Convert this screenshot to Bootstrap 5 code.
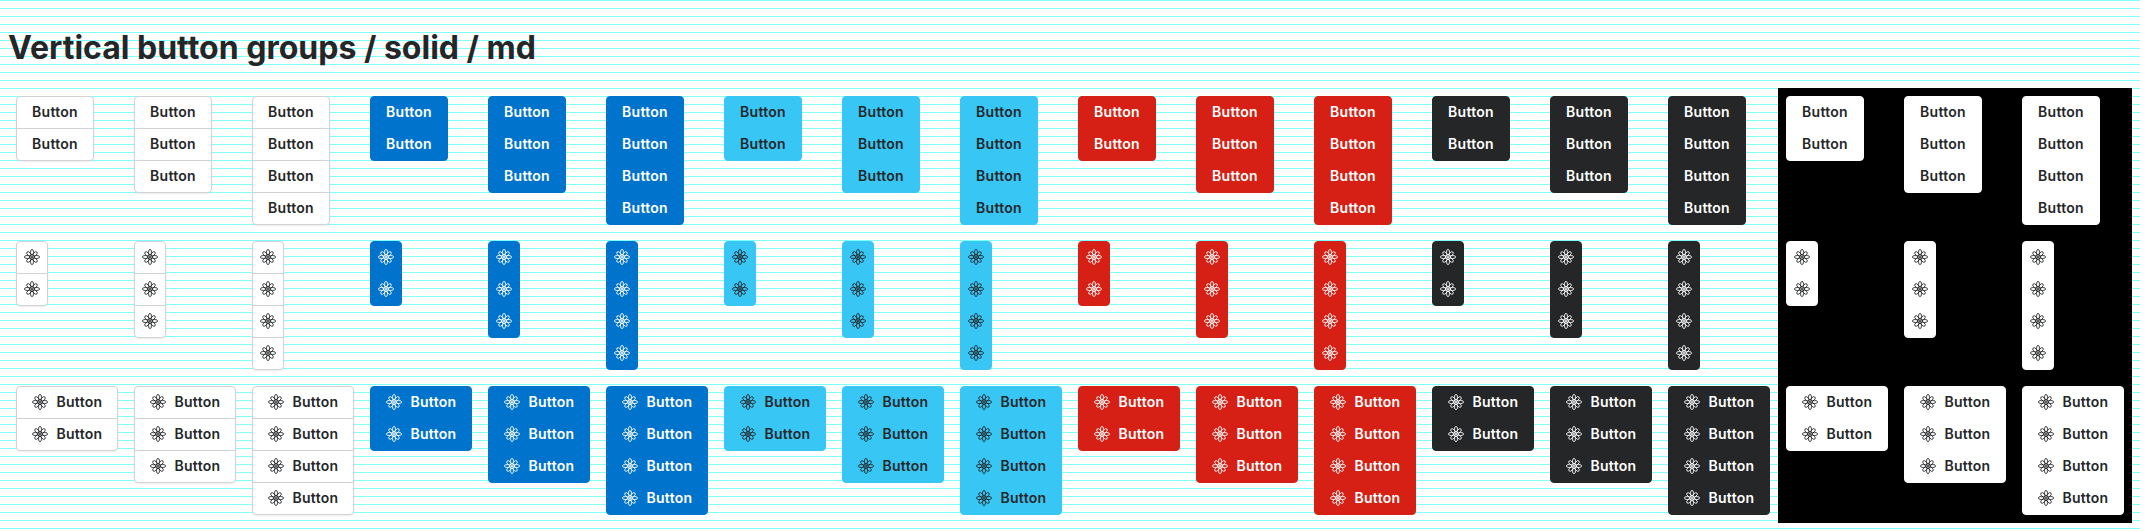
<!DOCTYPE html>
<html lang="en">
<head>
<meta charset="utf-8">
<meta name="viewport" content="width=device-width, initial-scale=1">
<title>Vertical button groups</title>
<link href="https://cdn.jsdelivr.net/npm/bootstrap@5.3.0/dist/css/bootstrap.min.css" rel="stylesheet">
<style>
body {
  font-family: Inter, "Liberation Sans", sans-serif;
  color: #242628;
  min-height: 531px;
  background: #fff linear-gradient(to bottom, #80ffff 1px, transparent 1px) 0 0 / 100% 8px;
}
.page-title { font-size: 32px; font-weight: 700; line-height: 40px; margin: 28px 0 20px; }
.variant { display: grid; grid-template-columns: repeat(3, 118px); grid-auto-rows: 145px; }
.variant > div { padding: 8px; }
.variant.on-black { background: #000; }
.vgroup { border-radius: 4px; }
.vgroup > .btn {
  --bs-btn-font-size: 14px;
  --bs-btn-font-weight: 600;
  --bs-btn-line-height: 16px;
  --bs-btn-padding-x: 15px;
  --bs-btn-padding-y: 0;
  --bs-btn-border-radius: 4px;
  --bs-btn-color: #fff;
  width: 78px;
  height: 33px;
  padding-bottom: 1px;
  letter-spacing: .02em;
}
.vgroup > .btn.icon-only { --bs-btn-padding-x: 7px; width: 32px; }
.vgroup > .btn.icon-label { width: 102px; gap: 8.5px; justify-content: start; }
.btn svg { width: 16px; height: 16px; flex: none; }
.tone-default .btn { --bs-btn-color: #242628; --bs-btn-bg: #fff; --bs-btn-border-color: #d1d2d6; }
.tone-default .vgroup { box-shadow: 0 1px 2px rgba(0, 0, 0, .08); }
.tone-primary .btn { --bs-btn-bg: #0074cc; --bs-btn-border-color: #0074cc; }
.tone-info .btn { --bs-btn-color: #242628; --bs-btn-bg: #38c6f4; --bs-btn-border-color: #38c6f4; }
.tone-danger .btn { --bs-btn-bg: #d62015; --bs-btn-border-color: #d62015; }
.tone-dark .btn { --bs-btn-bg: #242628; --bs-btn-border-color: #242628; }
.tone-light .btn { --bs-btn-color: #242628; --bs-btn-bg: #fff; --bs-btn-border-color: #fff; }
</style>
</head>
<body>
<svg class="d-none" xmlns="http://www.w3.org/2000/svg">
  <symbol id="atom" viewBox="0 0 16 16">
    <g fill="none" stroke="currentColor" stroke-width=".85">
      <g id="petals">
        <ellipse cx="8" cy="3.2" rx="1.5" ry="2.8"/>
        <ellipse cx="8" cy="12.8" rx="1.5" ry="2.8"/>
        <ellipse cx="3.2" cy="8" rx="2.8" ry="1.5"/>
        <ellipse cx="12.8" cy="8" rx="2.8" ry="1.5"/>
      </g>
      <g transform="rotate(45 8 8)">
        <ellipse cx="8" cy="3.6" rx="1.6" ry="2.6"/>
        <ellipse cx="8" cy="12.4" rx="1.6" ry="2.6"/>
        <ellipse cx="3.6" cy="8" rx="2.6" ry="1.6"/>
        <ellipse cx="12.4" cy="8" rx="2.6" ry="1.6"/>
      </g>
      <circle cx="8" cy="8" r="2.3"/>
    </g>
    <circle cx="8" cy="8" r="1" fill="currentColor"/>
  </symbol>
</svg>
<main class="px-2">
  <h1 class="page-title">Vertical button groups / solid / md</h1>
  <div class="d-flex" id="board"></div>
</main>
<script src="https://cdn.jsdelivr.net/npm/bootstrap@5.3.0/dist/js/bootstrap.bundle.min.js"></script>
<script>
const tones = ['default', 'primary', 'info', 'danger', 'dark', 'light'];
const icon = '<svg aria-hidden="true"><use href="#atom"/></svg>';
const kinds = [
  { cls: 'justify-content-center', html: 'Button' },
  { cls: 'justify-content-center icon-only', html: icon },
  { cls: 'icon-label', html: icon + '<span>Button</span>' }
];
const group = (kind, count) =>
  '<div><div class="btn-group-vertical vgroup" role="group">' +
  `<button type="button" class="btn d-flex align-items-center ${kind.cls}">${kind.html}</button>`.repeat(count) +
  '</div></div>';
document.getElementById('board').innerHTML = tones.map(tone =>
  `<section class="variant tone-${tone}${tone === 'light' ? ' on-black' : ''}">` +
  kinds.map(kind => [2, 3, 4].map(n => group(kind, n)).join('')).join('') +
  '</section>').join('');
</script>
</body>
</html>
